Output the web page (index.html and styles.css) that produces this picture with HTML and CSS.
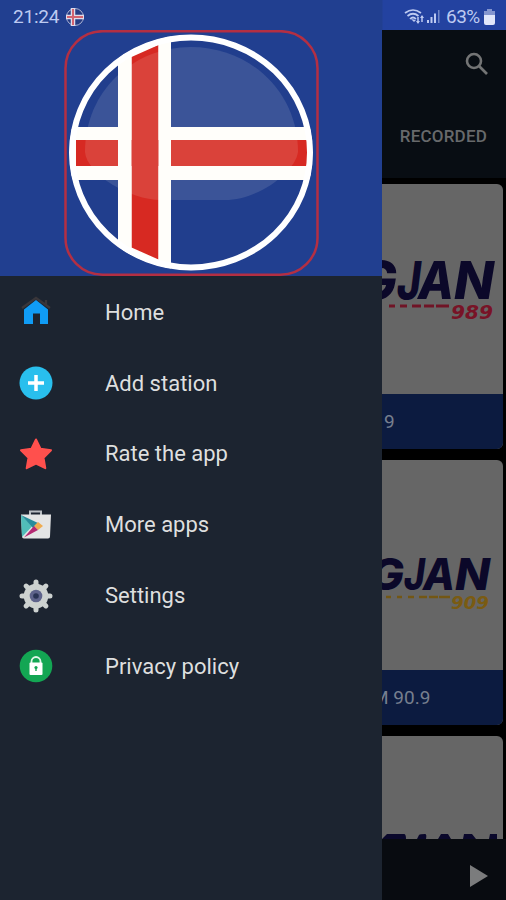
FILE: index.html
```html
<!DOCTYPE html>
<html lang="en">
<head>
<meta charset="utf-8">
<title>Radio Iceland</title>
<link rel="stylesheet" href="styles.css">
</head>
<body>
<div class="screen">
  <header class="status">
    <span class="clock">21:24</span>
    <svg class="mini-flag" width="20" height="20" viewBox="0 0 20 20"><circle cx="10" cy="10" r="8.500" fill="#263c83" stroke="#a9b0d2"/><path d="M8 1v18M1 10h18" stroke="#dedbea" stroke-width="4.500"/><path d="M8 2v16M2 10h16" stroke="#d36370" stroke-width="2"/></svg>
    <svg class="wifi" width="20" height="18" viewBox="0 0 20 18" fill="none" stroke="#bdcaf1" stroke-width="1.700"><path d="M1 5Q9-1 17 5M3.500 8Q9 3.500 14.500 8M6 11Q9 8 12 11"/><path d="M7 11l3 3 2-2z" fill="#bdcaf1" stroke="none"/><path d="M14 9v6M18 8v6" stroke-width="1.500"/><path d="M12 13l2 3 2-3zM16 10l2-3 2 3z" fill="#bdcaf1" stroke="none"/></svg>
    <svg class="signal" width="15" height="15" viewBox="0 0 15 15"><path d="M1 11h2v3H1zM4.500 8h2v6h-2zM8 4.500h2V14H8z" fill="#bdcaf1"/><path d="M12 1h1.500v13H12z" fill="#7288c8"/></svg>
    <span class="percent">63%</span>
    <svg class="battery" width="11" height="16" viewBox="0 0 11 16"><path d="M3 0h5v2h3v4H0V2h3z" fill="#8395cf"/><path d="M0 6h11v8q0 2-2 2H2q-2 0-2-2z" fill="#e0e6fa"/></svg>
  </header>
  <div class="body">
    <nav class="drawer">
      <div class="banner">
        <svg width="256" height="246" viewBox="0 0 256 246">
          <defs><clipPath id="disc"><ellipse cx="128" cy="122.500" rx="121.500" ry="117.500"/></clipPath></defs>
          <rect x="2.500" y="1.200" width="252" height="243.500" rx="37" fill="none" stroke="#b42f43" stroke-width="2.500"/>
          <g clip-path="url(#disc)">
            <path d="M0 0h256v246H0z" fill="#213e8d"/>
            <path d="M55 0h53v246H55zM0 97h256v53H0z" fill="#fffefa"/>
            <path d="M68.500 27l27-12v214.500l-27-12zM13 110h231v26H13z" fill="#d72922"/>
            <path d="M22 122C22 61 70 17 128 17S235 61 235 122C232 143 194 170 162 170H98C66 170 24 144 22 122Z" fill="#f4f5ee" opacity=".12"/>
            <path d="M55 0h13.500v246H55zM95.500 0H108v246H95.500zM0 97h68.500v13H0zM95.500 97H256v13H95.500zM0 136h68.500v14H0zM95.500 136H256v14H95.500z" fill="#fffefa"/>
          </g>
          <ellipse cx="128" cy="122.500" rx="119" ry="115" fill="none" stroke="#fff" stroke-width="6"/>
        </svg>
      </div>
      <ul class="menu">
        <li><svg width="34" height="34" viewBox="0 0 34 34"><path d="M5 14.500L17 5l12 9.500V29h-8V18.500h-7V29H5z" fill="#109cf5"/><path d="M3 13L17 3l14 10M27 5v5" fill="none" stroke="#39363a" stroke-width="2.300"/></svg><span>Home</span></li>
        <li><svg width="34" height="34" viewBox="0 0 34 34"><circle cx="17" cy="17" r="16.500" fill="#29bfed"/><path d="M17 9v16M9 17h16" stroke="#fff" stroke-width="3.500"/></svg><span>Add station</span></li>
        <li><svg width="34" height="34" viewBox="0 0 34 34"><path d="M17 2.500l4.500 9.200 10.500 1.500-7.500 7.500 1.800 10.500L17 26.500l-9.300 4.700 1.800-10.500L2 13.200l10.500-1.500z" fill="#ff504d" stroke="#ff504d" stroke-width="2" stroke-linejoin="round"/></svg><span>Rate the app</span></li>
        <li><svg width="34" height="34" viewBox="0 0 34 34"><path d="M11 7V3.500h11V7" fill="none" stroke="#b9bec3" stroke-width="2"/><path d="M2 6.500h30l-1 22q0 2-2 2H5q-2 0-2-2z" fill="#e4e5e5"/><path d="M2 7l11 11.500L3 29z" fill="#51bdb9"/><path d="M2 7l17 8-5 5z" fill="#278d9c"/><path d="M19 14l5 4-5 4-4-4z" fill="#efac50"/><path d="M15 18l4 4L5 29.500z" fill="#b52a72"/></svg><span>More apps</span></li>
        <li><svg width="34" height="34" viewBox="0 0 34 34"><g stroke="#cdd2d0" stroke-width="5" stroke-linecap="round"><path d="M17 3v28M3 17h28M7.100 7.100l19.800 19.800M26.900 7.100L7.100 26.900"/></g><circle cx="17" cy="17" r="12.300" fill="#cdd2d0"/><circle cx="17" cy="17" r="6.300" fill="#5e638b"/><circle cx="17" cy="17" r="2.800" fill="#293354"/></svg><span>Settings</span></li>
        <li><svg width="34" height="34" viewBox="0 0 34 34"><circle cx="17" cy="17" r="16.300" fill="#13a653"/><path d="M12.500 14v-1.500a4.500 4.500 0 0 1 9 0V14" fill="none" stroke="#e1f5e8" stroke-width="1.800"/><rect x="10.500" y="13.500" width="13" height="12.500" rx="1" fill="#fff"/><circle cx="17" cy="18.500" r="1.600" fill="#13a653"/><path d="M16.300 18.500h1.400V22h-1.400z" fill="#13a653"/></svg><span>Privacy policy</span></li>
      </ul>
    </nav>
    <main class="content">
      <div class="appbar">
        <svg class="search" width="24" height="24" viewBox="0 0 24 24" fill="none" stroke="#737475" stroke-width="2.600"><circle cx="9" cy="9" r="7"/><path d="M14 14l8 8"/></svg>
        <div class="tab">RECORDED</div>
      </div>
      <div class="stations">
        <article class="card">
          <svg class="logo" width="121" height="210" viewBox="0 0 121 210">
            <g class="name"><text x="-24" y="114.500" textLength="39" lengthAdjust="spacingAndGlyphs">G</text><text x="15" y="114.500" textLength="24" lengthAdjust="spacingAndGlyphs">J</text><text x="36" y="114.500" textLength="36" lengthAdjust="spacingAndGlyphs">A</text><text x="72" y="114.500" textLength="40" lengthAdjust="spacingAndGlyphs">N</text></g>
            <path d="M7 122h6M18 122h7M30 122h9M42 122h10M54 122h13" stroke="#701426" stroke-width="3"/>
            <text class="freq red" x="69" y="135" textLength="42" lengthAdjust="spacingAndGlyphs">989</text>
          </svg>
          <div class="caption"><span>9</span></div>
        </article>
        <article class="card">
          <svg class="logo" width="121" height="210" viewBox="0 0 121 210">
            <g class="name small"><text x="-13" y="129.500" textLength="35" lengthAdjust="spacingAndGlyphs">G</text><text x="22" y="129.500" textLength="21" lengthAdjust="spacingAndGlyphs">J</text><text x="41" y="129.500" textLength="32" lengthAdjust="spacingAndGlyphs">A</text><text x="73" y="129.500" textLength="35" lengthAdjust="spacingAndGlyphs">N</text></g>
            <path d="M4 137h5M15 137h5M26 137h6M37 137h8M47 137h9M57 137h11" stroke="#735714" stroke-width="2.500"/>
            <text class="freq gold" x="69" y="148.500" textLength="38" lengthAdjust="spacingAndGlyphs">909</text>
          </svg>
          <div class="caption wide"><span>M 90.9</span></div>
        </article>
        <article class="card">
          <svg class="logo" width="121" height="210" viewBox="0 0 121 210"><path d="M0 103l5-5h17q2 0 2 5zM35 103l2-4q1-1 6-1 2 0 1 5zM56 103l3-5h7l3 5zM81 103l1-5h8l4 5zM107 103l1-5h7v5z" fill="#0a082b"/></svg>
        </article>
      </div>
      <footer class="player"><svg width="18" height="22" viewBox="0 0 18 22"><path d="M0 0l18 11L0 22z" fill="#7b7c7d"/></svg></footer>
    </main>
  </div>
</div>
</body>
</html>
```

FILE: styles.css
```css
* { box-sizing: border-box; }
body { margin: 0; background: #000; font-family: Roboto, sans-serif; }
svg { display: block; flex: none; }
.screen { width: 506px; height: 900px; display: flex; flex-direction: column; overflow: hidden; }
.status { height: 30px; flex: none; display: flex; align-items: center; padding: 3px 11px 0 13px; background: linear-gradient(90deg, #213f90 0, #213f90 382px, #2342a0 383px); color: #bdcaf1; }
.clock { width: 52px; font-size: 19px; letter-spacing: -.2px; }
.wifi { margin-left: auto; }
.signal { margin-left: 2px; }
.percent { width: 35px; margin: 0 2px 0 5px; font-size: 19px; letter-spacing: -.5px; }
.battery { margin-left: 1px; }
.body { display: flex; flex: 1; min-height: 0; }
.drawer { width: 382px; flex: none; background: #1c2430; }
.banner { height: 246px; padding-left: 63px; background: #213f90; }
.menu { list-style: none; margin: 0; padding: 1px 0 0; }
.menu li { height: 70.8px; display: flex; align-items: center; gap: 52px; padding-left: 19px; font-size: 22px; color: #dedfdf; }
.content { width: 124px; display: flex; flex-direction: column; background: #000; }
.appbar { height: 148px; flex: none; display: flex; flex-direction: column; align-items: flex-end; background: #080d13; }
.search { margin: 22px 17px 0 0; }
.tab { margin: 50px 19px 0 0; font-size: 17px; line-height: 20px; font-weight: 500; letter-spacing: .2px; color: #67696b; }
.stations { flex: 1; min-height: 0; overflow: hidden; display: flex; flex-direction: column; gap: 11px; padding-top: 6px; }
.card { width: 121px; height: 265px; flex: none; overflow: hidden; border-radius: 0 6px 6px 0; background: #666; }
.name { font: italic 800 52px Inter, sans-serif; fill: #0b0829; }
.name.small { font-size: 44px; }
.freq { font: italic 700 19px "DejaVu Sans", sans-serif; }
.red { fill: #781326; }
.gold { font-size: 17px; fill: #7a5b12; }
.caption { height: 55px; display: flex; align-items: center; background: #0c1b40; color: #777f8e; font-size: 19px; }
.caption span { margin-left: 2px; }
.caption.wide span { margin-left: -10px; }
.player { height: 61px; flex: none; display: flex; justify-content: flex-end; align-items: center; padding: 12px 18px 0 0; background: #080b10; }
```
